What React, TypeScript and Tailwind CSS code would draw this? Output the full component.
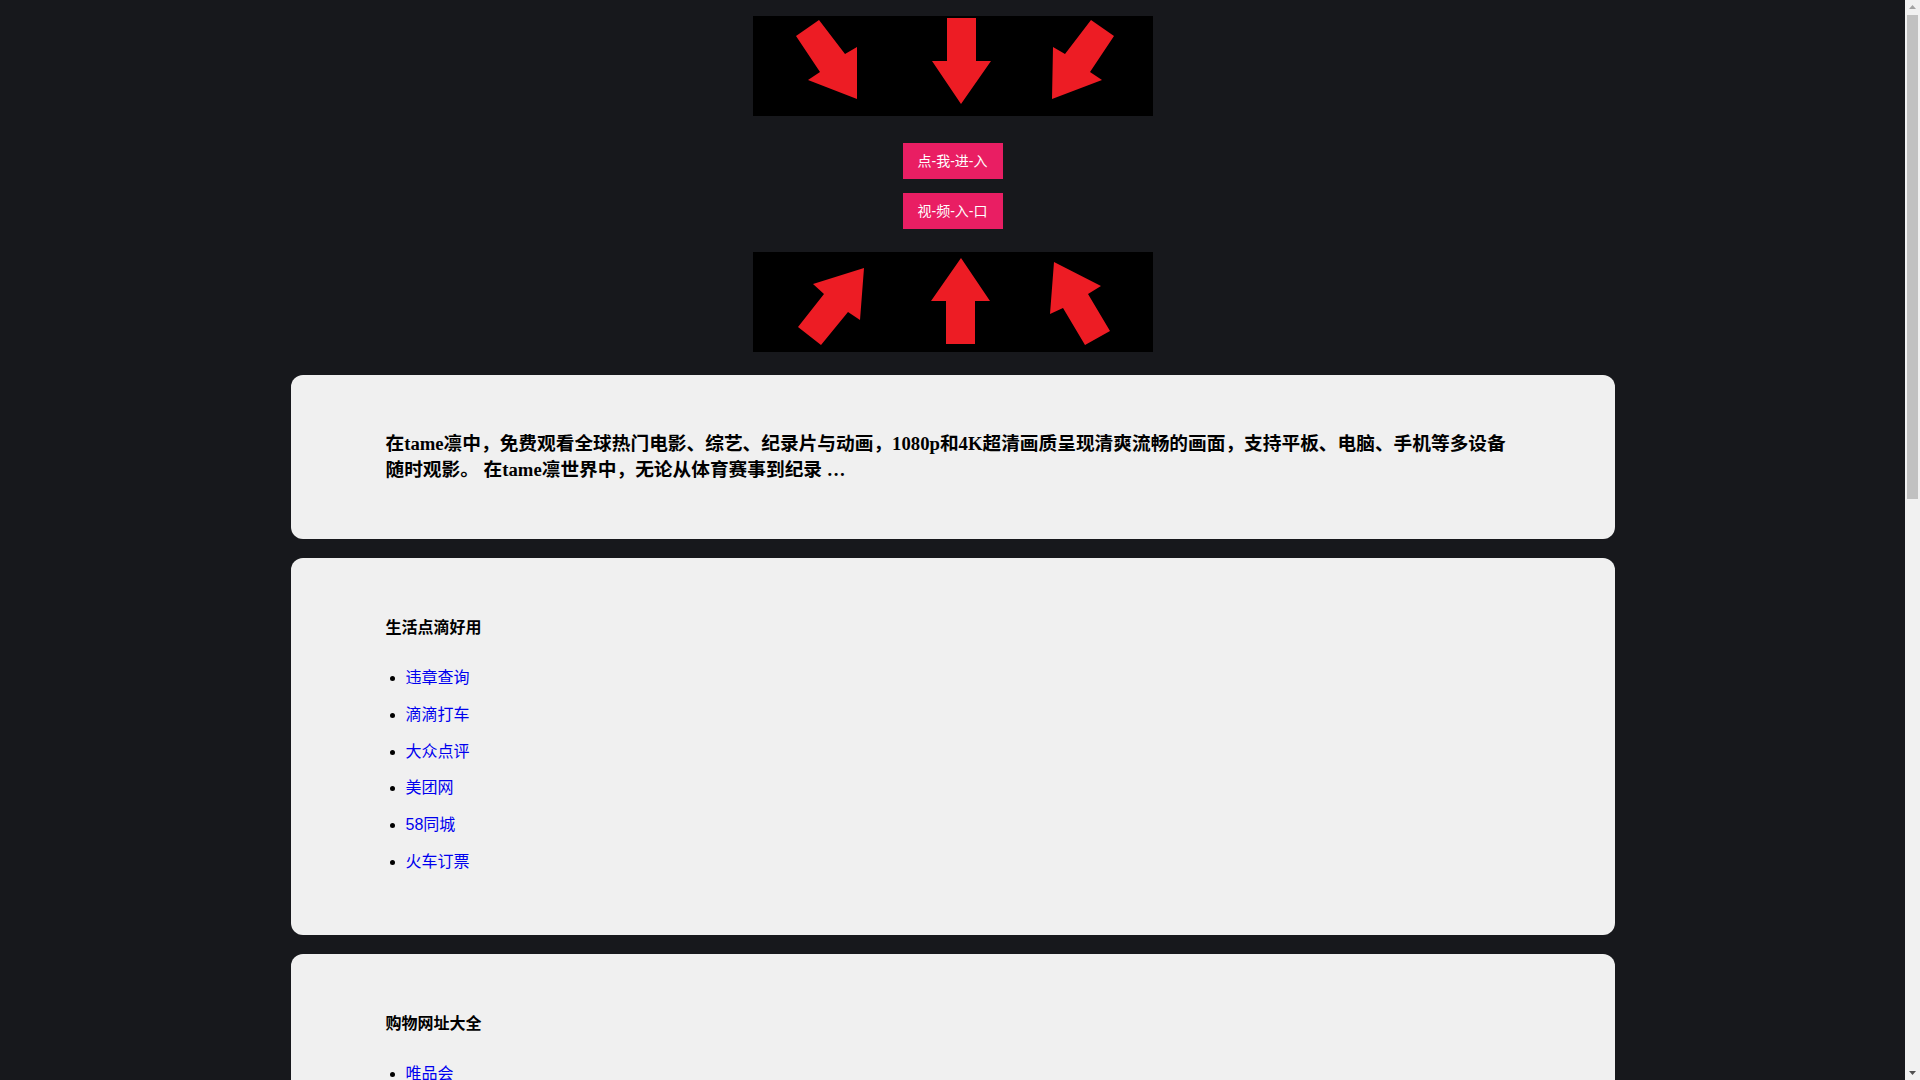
import React from 'react';

const RED = '#ed1c24';

const DownArrows = () => (
  <svg width="400" height="100" viewBox="0 0 400 100" className="block bg-black">
    <polygon fill={RED} points="43,20 66,4 92,38 104,31 104,83 55,64 67,56" />
    <polygon fill={RED} points="194,2 223,2 223,45 238,45 208,88 179,45 194,45" />
    <polygon fill={RED} points="361,20 338,4 312,38 300,31 299,83 349,64 337,56" />
  </svg>
);

const UpArrows = () => (
  <svg width="400" height="100" viewBox="0 0 400 100" className="block bg-black">
    <polygon fill={RED} points="45,75 68,93 95,60 107,68 111,16 60,32 71,42" />
    <polygon fill={RED} points="208,6 237,49 222,49 222,92 193,92 193,49 178,49" />
    <polygon fill={RED} points="301,10 348,34 335,42 357,79 332,93 310,56 297,62" />
  </svg>
);

const EntryButton = ({ label }: { label: string }) => (
  <a
    href="#"
    className="flex h-[36px] w-[100px] items-center justify-center bg-[#e91e63] text-[14px] text-white"
  >
    {label}
  </a>
);

const LinkCard = ({ title, links }: { title: string; links: string[] }) => (
  <section className="rounded-xl bg-[#f0f0f0] px-[95px] pt-[58px] pb-[54px]">
    <h3 className="mb-5 text-[16px] leading-[24px] font-bold text-black">{title}</h3>
    <ul className="list-disc pl-5">
      {links.map((l) => (
        <li key={l} className="text-[16px] leading-[36.8px] text-black">
          <a href="#" className="text-[#0000ee]">
            {l}
          </a>
        </li>
      ))}
    </ul>
  </section>
);

// page scrollbar as seen in the screenshot
const Scrollbar = () => (
  <aside className="sticky top-0 flex h-screen w-[15px] shrink-0 flex-col items-center bg-[#f1f1f1]">
    <svg width="15" height="15" viewBox="0 0 15 15" className="block">
      <polygon points="4,9 11,9 7.5,5" fill="#a3a3a3" />
    </svg>
    <div className="h-[484px] w-[11px] bg-[#c1c1c1]" />
    <div className="flex-1" />
    <svg width="15" height="15" viewBox="0 0 15 15" className="block">
      <polygon points="4,6 11,6 7.5,10" fill="#505050" />
    </svg>
  </aside>
);

export default function App() {
  return (
    <div
      className="flex min-h-screen bg-[#17181c]"
      style={{ fontFamily: '"Liberation Sans", "Noto Sans CJK SC", sans-serif' }}
    >
      <div className="min-w-0 flex-1 pt-4 pb-10">
        <div className="flex flex-col items-center">
          <DownArrows />
          <div className="mt-[27px] flex flex-col items-center gap-[14px]">
            <EntryButton label="点-我-进-入" />
            <EntryButton label="视-频-入-口" />
          </div>
          <div className="mt-[23px]">
            <UpArrows />
          </div>
        </div>

        <main className="mx-auto mt-[23px] flex w-[1324px] flex-col gap-[19px]">
          <section className="rounded-xl bg-[#f0f0f0] py-[56px] pr-[102px] pl-[95px]">
            <p
              className="text-[18.7px] leading-[26px] font-bold text-black"
              style={{ fontFamily: '"Liberation Serif", "Noto Sans CJK SC", serif' }}
            >
              在tame凛中，免费观看全球热门电影、综艺、纪录片与动画，1080p和4K超清画质呈现清爽流畅的画面，支持平板、电脑、手机等多设备随时观影。 在tame凛世界中，无论从体育赛事到纪录 …
            </p>
          </section>

          <LinkCard
            title="生活点滴好用"
            links={['违章查询', '滴滴打车', '大众点评', '美团网', '58同城', '火车订票']}
          />

          <LinkCard
            title="购物网址大全"
            links={['唯品会', '淘宝网', '京东商城', '天猫', '苏宁易购', '当当网']}
          />

          <LinkCard
            title="影视娱乐"
            links={['爱奇艺', '腾讯视频', '优酷', '哔哩哔哩', '芒果TV', '网易云音乐']}
          />
        </main>
      </div>
      <Scrollbar />
    </div>
  );
}
